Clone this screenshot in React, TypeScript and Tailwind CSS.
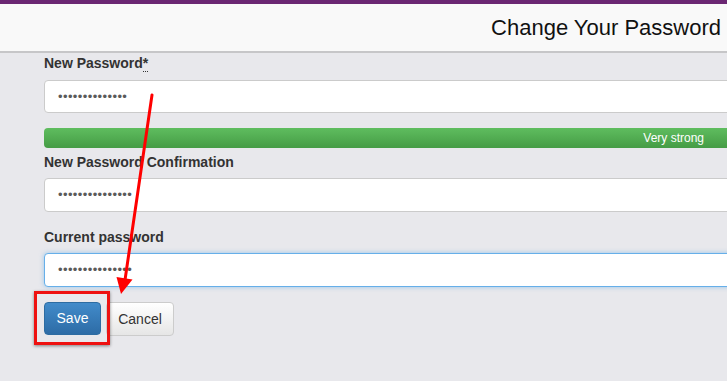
import React from "react";

const font = { fontFamily: '"Liberation Sans", Arial, Helvetica, sans-serif' };

function Dots({ n }: { n: number }) {
  return <span className="text-[13px] tracking-[0.4px] text-[#5a5a5a]">{"•".repeat(n)}</span>;
}

export default function App() {
  return (
    <div className="relative w-[727px] h-[381px] overflow-hidden bg-[#e8e8ec]" style={font}>
      <div className="h-[4px] bg-[#6b2773]" />
      <div className="h-[49px] bg-[#f9f9f9] border-b-2 border-[#c6c6c8] flex items-center justify-end pr-[6px]">
        <h1 className="text-[22px] leading-[26px] text-[#111] font-normal">Change Your Password</h1>
      </div>
      <div className="pl-[44px] w-[744px]">
        <label className="block text-[14px] leading-[20px] font-bold text-[#333]">
          New Password
          <abbr className="no-underline border-b border-dotted border-[#333]">*</abbr>
        </label>
        <div className="mt-[7px] h-[33px] bg-white border border-[#cbcbcb] rounded-[4px] flex items-center pl-[13px]">
          <Dots n={14} />
        </div>
        <div className="mt-[15px] h-[20px] rounded-[4px] bg-gradient-to-b from-[#5fbd5f] to-[#459c45] flex items-center justify-end pr-[40px]">
          <span className="text-[12px] text-white">Very strong</span>
        </div>
        <label className="block mt-[4px] text-[14px] leading-[20px] font-bold text-[#333]">
          New Password Confirmation
        </label>
        <div className="mt-[6px] h-[34px] bg-white border border-[#cbcbcb] rounded-[4px] flex items-center pl-[13px]">
          <Dots n={15} />
        </div>
        <label className="block mt-[15px] text-[14px] leading-[20px] font-bold text-[#333]">
          Current password
        </label>
        <div className="mt-[6px] h-[34px] bg-white border border-[#66afe9] rounded-[4px] shadow-[0_0_5px_rgba(102,175,233,0.6)] flex items-center pl-[13px]">
          <Dots n={15} />
        </div>
        <div className="mt-[15px] flex gap-[5px]">
          <button className="h-[33px] w-[57px] rounded-[4px] border border-[#2d6ca2] bg-gradient-to-b from-[#428bca] to-[#2d6ca6] text-white text-[14px]">
            Save
          </button>
          <button className="h-[34px] w-[68px] rounded-[4px] border border-[#cccccc] bg-gradient-to-b from-white to-[#e6e6e6] text-[#333] text-[14px]">
            Cancel
          </button>
        </div>
      </div>
      <div className="absolute left-[34px] top-[291px] w-[76px] h-[54px] border-[3px] border-[#ee1111] shadow-[0_1px_3px_rgba(0,0,0,0.45)]" />
      <svg className="absolute left-0 top-0" width="727" height="381" viewBox="0 0 727 381">
        <line x1="152" y1="95" x2="125" y2="280" stroke="#ff0000" strokeWidth="3" strokeLinecap="round" />
        <polygon points="121,294 116.5,277 132.5,279.5" fill="#ff0000" />
      </svg>
    </div>
  );
}
